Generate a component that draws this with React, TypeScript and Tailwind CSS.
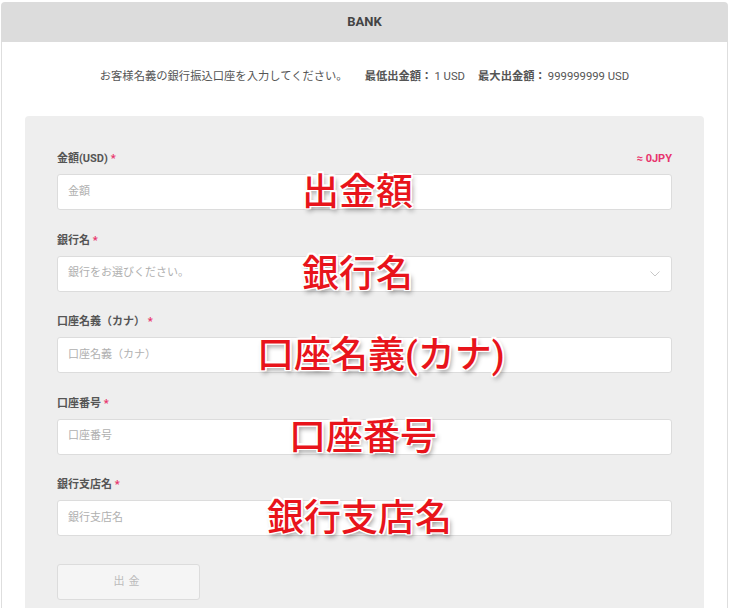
import React from 'react';

interface FieldProps {
  label: string;
  placeholder: string;
  note?: string;
  select?: boolean;
  overlay: string;
  overlayLeft: string;
}

const overlayText =
  "pointer-events-none absolute top-1/2 -translate-y-1/2 whitespace-nowrap text-[37px] font-medium leading-none text-[#e8141b] [text-shadow:1.5px_1.5px_0_#fff,-1.5px_-1.5px_0_#fff,1.5px_-1.5px_0_#fff,-1.5px_1.5px_0_#fff,0_1.5px_0_#fff,0_-1.5px_0_#fff,1.5px_0_0_#fff,-1.5px_0_0_#fff,2px_3px_5px_rgba(0,0,0,0.45)]";

const Field: React.FC<FieldProps> = ({ label, placeholder, note, select, overlay, overlayLeft }) => {
  return (
    <div className="mb-[22.5px]">
      <div className="mb-[7px] flex h-4 items-center justify-between text-[11px] leading-4">
        <span className="font-bold text-[#555]">
          {label} <span className="text-[#e8336d]">*</span>
        </span>
        {note && <span className="font-bold text-[#e8336d]">{note}</span>}
      </div>
      <div className="relative flex h-9 items-center rounded-[3px] border border-[#dcdcdc] bg-white px-[10px]">
        <span className="flex-1 text-[11px] text-[#b0b0b0]">{placeholder}</span>
        {select && (
          <svg width="10" height="6" viewBox="0 0 10 6" className="mr-[1px]">
            <polyline points="0.5,0.5 5,5 9.5,0.5" fill="none" stroke="#c8c8c8" strokeWidth="1" />
          </svg>
        )}
        <span className={`${overlayText} ${overlayLeft}`}>{overlay}</span>
      </div>
    </div>
  );
};

const fields: FieldProps[] = [
  { label: '金額(USD)', placeholder: '金額', note: '≈ 0JPY', overlay: '出金額', overlayLeft: 'left-[244px]' },
  { label: '銀行名', placeholder: '銀行をお選びください。', select: true, overlay: '銀行名', overlayLeft: 'left-[244px]' },
  { label: '口座名義（カナ）', placeholder: '口座名義（カナ）', overlay: '口座名義(カナ)', overlayLeft: 'left-[199px]' },
  { label: '口座番号', placeholder: '口座番号', overlay: '口座番号', overlayLeft: 'left-[231px]' },
  { label: '銀行支店名', placeholder: '銀行支店名', overlay: '銀行支店名', overlayLeft: 'left-[209px]' },
];

export default function App() {
  return (
    <div className="min-h-[608px] overflow-hidden bg-white pl-[1px] pt-[2px] font-['Roboto','Noto_Sans_CJK_JP',sans-serif]">
      <div className="w-[727px] rounded-t-[4px]">
        <div className="flex h-10 items-center justify-center rounded-t-[4px] bg-[#dcdcdc] text-[13px] font-bold text-[#444]">
          BANK
        </div>
        <div className="border-x border-[#dedede] pt-[27px] pb-2">
          <div className="flex h-[16px] items-center justify-center text-[11.3px] text-[#555]">
            <span>お客様名義の銀行振込口座を入力してください。</span>
            <span className="ml-[17px] font-bold">最低出金額：</span>
            <span className="ml-[2px]">1 USD</span>
            <span className="ml-[13px] font-bold">最大出金額：</span>
            <span className="ml-[2px]">999999999 USD</span>
          </div>
          <div className="mx-[23px] mt-[31px] rounded-[4px] bg-[#eeeeee] px-[32px] pt-[35px] pb-10">
            {fields.map((f) => (
              <Field key={f.label} {...f} />
            ))}
            <button className="mt-[5.5px] h-9 w-[143px] rounded-[3px] border border-[#dcdcdc] bg-[#f5f5f5] text-[11px] tracking-[4px] text-[#bbb]">
              出金
            </button>
          </div>
        </div>
      </div>
    </div>
  );
}
